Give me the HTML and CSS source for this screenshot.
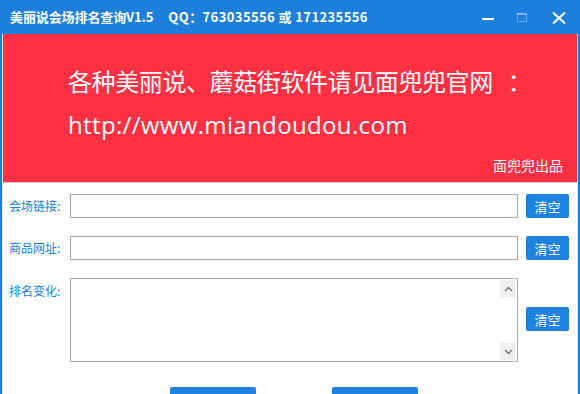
FILE: index.html
```html
<!DOCTYPE html>
<html lang="zh-CN">
<head>
<meta charset="utf-8">
<title>美丽说会场排名查询</title>
<link rel="stylesheet" href="styles.css">
</head>
<body>
<div class="window">
  <div class="titlebar">
    <div class="title">美丽说会场排名查询V1.5<span class="qq">QQ：763035556 或 171235556</span></div>
    <div class="controls">
      <svg class="ctl min" width="14" height="14" viewBox="0 0 14 14"><rect x="1" y="6" width="12" height="2" fill="#fff"/></svg>
      <svg class="ctl max" width="14" height="14" viewBox="0 0 14 14"><rect x="2.5" y="3.5" width="9" height="8" fill="none" stroke="#fff" stroke-opacity="0.35"/><rect x="2.5" y="3.5" width="9" height="1.5" fill="#fff" fill-opacity="0.35"/></svg>
      <svg class="ctl close" width="16" height="14" viewBox="0 0 16 14"><path d="M2 1.5 L14 12.5 M14 1.5 L2 12.5" stroke="#fff" stroke-width="2"/></svg>
    </div>
  </div>
  <div class="body">
    <div class="banner">
      <div class="line1">各种美丽说、蘑菇街软件请见面兜兜官网<span class="colon">：</span></div>
      <div class="line2">http://www.miandoudou.com</div>
      <div class="sign">面兜兜出品</div>
    </div>
    <div class="form">
      <label class="lbl">会场链接:</label>
      <div class="input"></div>
      <button class="btn">清空</button>

      <label class="lbl">商品网址:</label>
      <div class="input"></div>
      <button class="btn">清空</button>

      <label class="lbl top">排名变化:</label>
      <div class="textarea">
        <div class="scroll">
          <div class="arrow"><svg width="9" height="6" viewBox="0 0 9 6"><path d="M1 5 L4.5 1.5 L8 5" fill="none" stroke="#777" stroke-width="1.4"/></svg></div>
          <div class="arrow"><svg width="9" height="6" viewBox="0 0 9 6"><path d="M1 1 L4.5 4.5 L8 1" fill="none" stroke="#777" stroke-width="1.4"/></svg></div>
        </div>
      </div>
      <button class="btn mid">清空</button>
    </div>
    <div class="actions">
      <button class="big"></button>
      <button class="big"></button>
    </div>
  </div>
</div>
</body>
</html>
```
FILE: styles.css
```css
html, body {
  margin: 0;
  padding: 0;
  background: #ffffff;
  overflow: hidden;
}
body {
  width: 580px;
  height: 394px;
  font-family: "Noto Sans CJK SC", sans-serif;
}
.window {
  width: 580px;
  height: 420px;
  box-sizing: border-box;
  border-left: 2px solid #1c7fdb;
  border-right: 2px solid #1c7fdb;
  background: #fff;
}
.titlebar {
  height: 34px;
  background: #1c7fdb;
  margin: 0 -2px;
  display: flex;
  align-items: center;
  justify-content: space-between;
  color: #fff;
}
.title {
  padding-left: 10px;
  font-size: 13px;
  font-weight: bold;
  letter-spacing: -0.1px;
  line-height: 1;
  margin-top: -1px;
}
.qq {
  margin-left: 15px;
  letter-spacing: 0.4px;
}
.controls {
  display: flex;
  align-items: center;
  padding-right: 13px;
}
.ctl { display: block; }
.min { margin-right: 20px; margin-top: 3px; }
.max { margin-right: 22px; margin-top: -1px; }
.close { margin-top: 1px; }
.body {
  border-left: 1px solid #dbe6f1;
  border-right: 1px solid #dbe6f1;
  height: 386px;
}
.banner {
  background: #ff3043;
  height: 148px;
  border-bottom: 1px solid #d8d0d4;
  box-sizing: content-box;
  position: relative;
  color: #fff;
  padding-left: 65px;
  display: flex;
  flex-direction: column;
}
.line1 {
  font-size: 24px;
  line-height: 30px;
  margin-top: 32px;
  letter-spacing: -0.4px;
}
.colon {
  margin-left: 15px;
}
.line2 {
  font-family: "Open Sans", "Noto Sans CJK SC", sans-serif;
  font-size: 24px;
  line-height: 30px;
  margin-top: 14px;
  letter-spacing: 0.35px;
}
.sign {
  position: absolute;
  right: 14px;
  top: 123px;
  font-size: 14px;
  line-height: 16px;
}
.form {
  display: grid;
  grid-template-columns: 61px 448px 43px;
  column-gap: 0;
  row-gap: 18px;
  padding: 11px 0 0 6px;
}
.lbl {
  font-size: 12px;
  color: #1b7fd6;
  align-self: center;
  line-height: 14px;
  white-space: nowrap;
}
.lbl.top {
  align-self: start;
  padding-top: 6px;
}
.input {
  height: 24px;
  box-sizing: border-box;
  border: 1px solid #a9a9a9;
  background: #fff;
}
.btn {
  height: 24px;
  width: 43px;
  margin-left: 8px;
  border: none;
  border-radius: 2px;
  background: #1e82e2;
  color: #fff;
  font-family: "Noto Sans CJK SC", sans-serif;
  font-size: 13px;
  padding: 0;
  align-self: start;
}
.btn.mid {
  align-self: center;
  margin-top: -2px;
}
.textarea {
  height: 84px;
  box-sizing: border-box;
  border: 1px solid #a9a9a9;
  display: flex;
  justify-content: flex-end;
  padding: 1px;
}
.scroll {
  width: 16px;
  display: flex;
  flex-direction: column;
  justify-content: space-between;
}
.arrow {
  height: 17px;
  background: #efefef;
  display: flex;
  align-items: center;
  justify-content: center;
}
.actions {
  display: flex;
  gap: 76px;
  padding: 25px 0 0 167px;
}
.big {
  width: 86px;
  height: 28px;
  border: none;
  border-radius: 2px;
  background: #1e82e2;
  padding: 0;
}
```
